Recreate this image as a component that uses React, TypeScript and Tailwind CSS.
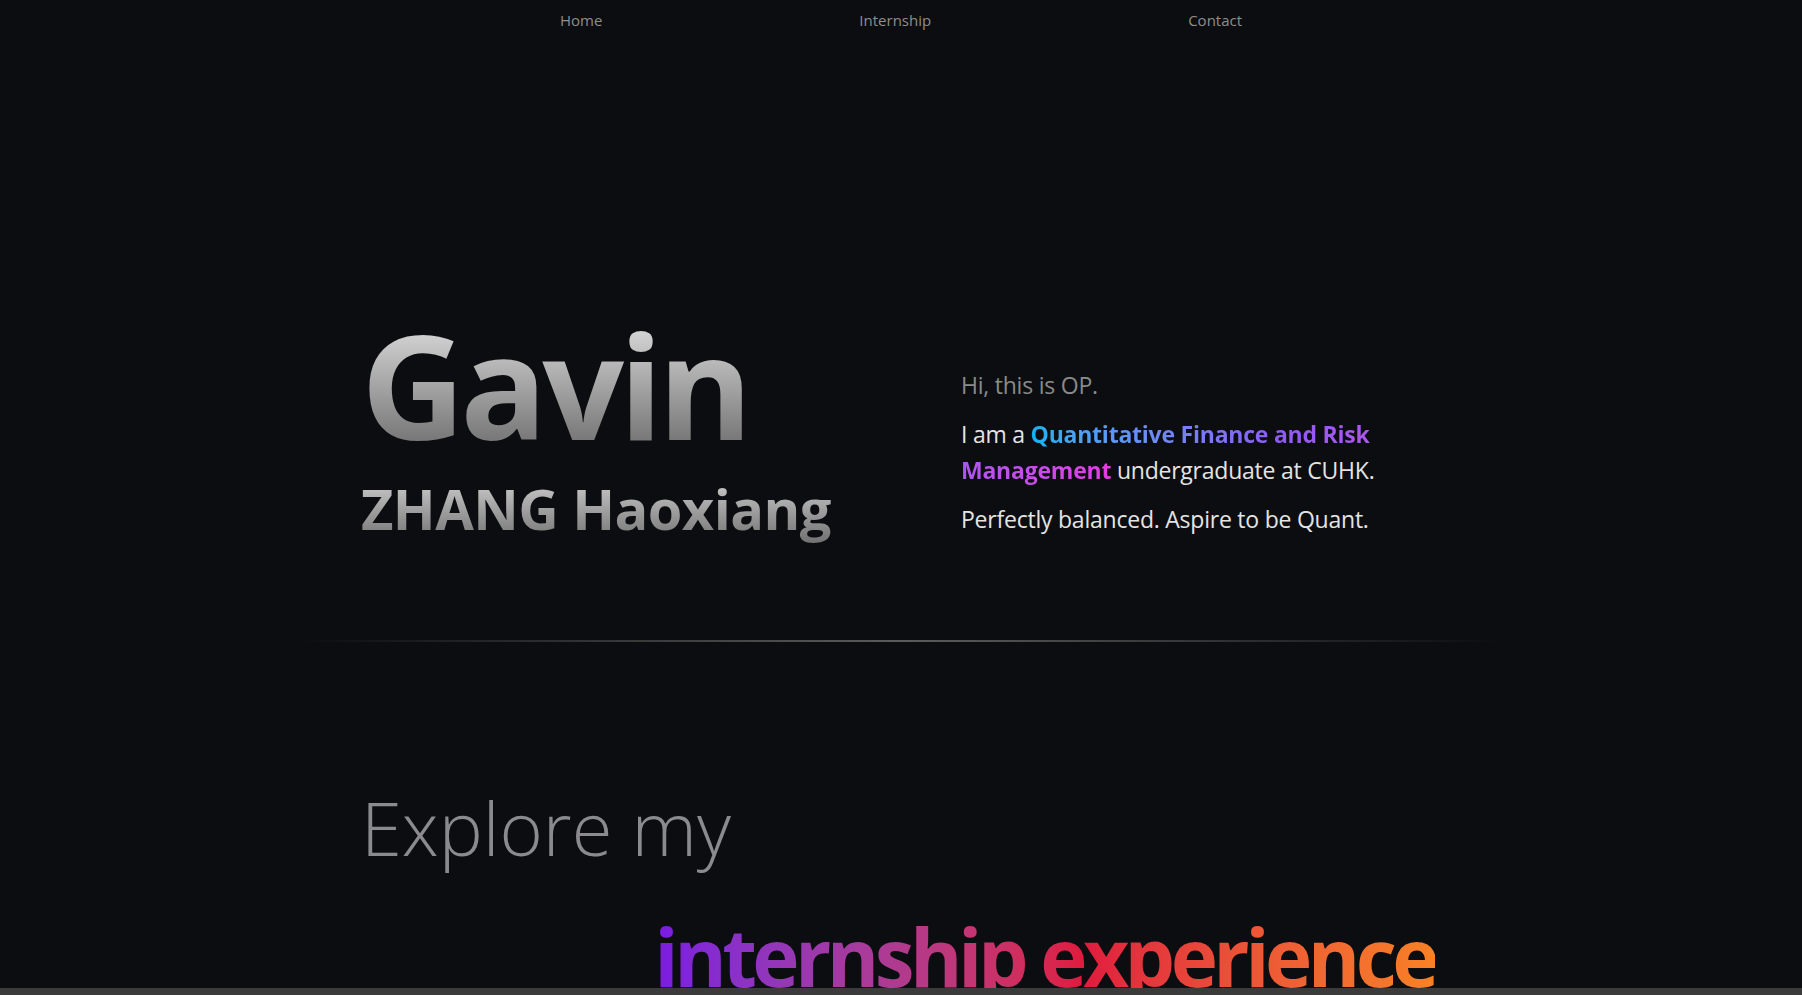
export default function App() {
  return (
    <div className="min-h-screen bg-[#0c0d10] font-['Open_Sans',_'Noto_Sans',_sans-serif] text-[#e4e4e4]">
      {/* Nav */}
      <nav className="flex h-10 items-center justify-center gap-[257px] text-[15px] text-[#8e8e8e]">
        <a href="#">Home</a>
        <a href="#">Internship</a>
        <a href="#">Contact</a>
      </nav>

      <div className="mx-auto max-w-[1200px]">
        {/* Hero */}
        <section className="flex items-start px-[60px] pt-[272px] pb-[97px]">
          <div className="w-[600px] shrink-0">
            <div className="bg-linear-to-b from-[#e4e4e4] to-[#6c6c6c] bg-clip-text text-[144px] leading-none font-bold tracking-[-0.035em] text-transparent">
              Gavin
            </div>
            <div className="mt-[17px] bg-linear-to-b from-[#d6d6d6] to-[#727272] bg-clip-text text-[56px] leading-[1.25] font-bold tracking-[-0.01em] text-transparent">
              ZHANG Haoxiang
            </div>
          </div>
          <div className="mt-[55px] w-[480px] text-[23px] leading-[36px] tracking-[-0.01em]">
            <p className="text-[#8a8a8a]">Hi, this is OP.</p>
            <p className="mt-[13px]">
              I am a{' '}
              <span className="bg-linear-to-r from-[#0cb2f4] via-[#8b5cf6] to-[#e23ce6] bg-clip-text font-bold text-transparent">
                Quantitative Finance and Risk Management
              </span>{' '}
              undergraduate at CUHK.
            </p>
            <p className="mt-[13px]">Perfectly balanced. Aspire to be Quant.</p>
          </div>
        </section>

        {/* Divider */}
        <div className="h-[2px] bg-linear-to-r from-transparent via-[#5c5c5c] to-transparent" />

        {/* Explore */}
        <section className="px-[60px] pt-[149px]">
          <div className="text-[74px] leading-none font-light text-[#8a8a8f]">Explore my</div>
          <div className="mt-[51px] pr-[6px] text-right">
            <span className="inline-block bg-linear-to-r from-[#7a18e2] via-[#df1a3e] via-55% to-[#f88124] bg-clip-text pb-4 text-[80px] leading-none font-bold tracking-[-0.057em] text-transparent">
              internship experience
            </span>
          </div>
        </section>
        <div className="h-[400px]" />
      </div>

      <div className="fixed inset-x-0 bottom-0 h-[7px] bg-[#3b3b3b]" />
    </div>
  );
}
